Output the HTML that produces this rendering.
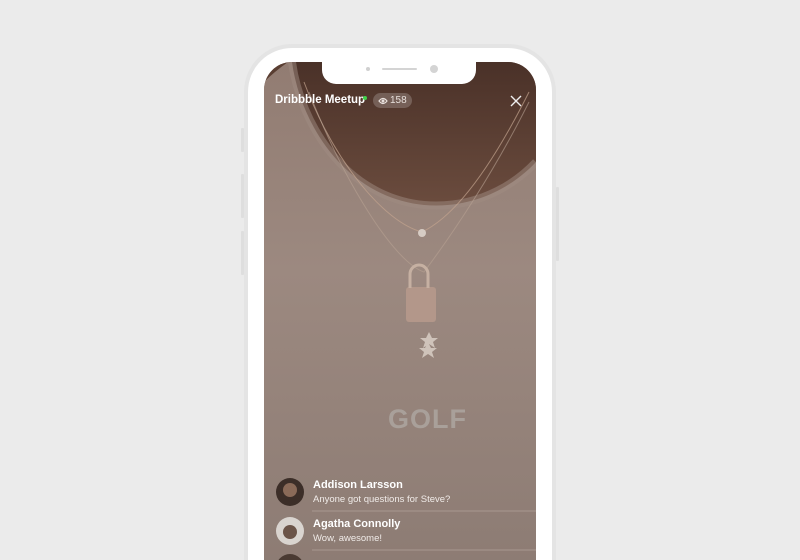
<!DOCTYPE html>
<html style="width:800px;height:560px;overflow:hidden"><head><meta charset="utf-8"><style>
body{margin:0;width:800px;height:560px;background:#ebebeb;overflow:hidden;position:relative;font-family:"Liberation Sans",sans-serif}
.phone{position:absolute;left:244px;top:44px;width:312px;height:516px;border-radius:48px 48px 0 0;background:#fff;border:4px solid #e4e4e4;border-bottom:none;box-sizing:border-box}
.btn{position:absolute;background:#dedede;width:3px;border-radius:1px}
.screen{position:absolute;left:264px;top:62px;width:272px;height:498px;border-radius:28px 28px 0 0;overflow:hidden;background:#927f76}
.txt{position:absolute;color:#fff;font-weight:bold}
</style></head><body>
<div class="btn" style="left:241px;top:128px;height:24px"></div>
<div class="btn" style="left:241px;top:174px;height:44px"></div>
<div class="btn" style="left:241px;top:231px;height:44px"></div>
<div class="btn" style="left:556px;top:187px;height:74px"></div>
<div class="phone"></div>
<div class="screen">
<svg width="272" height="520" style="position:absolute;left:0;top:0">
<defs>
<linearGradient id="sk" x1="0" y1="0" x2="0" y2="1"><stop offset="0" stop-color="#4a3128"/><stop offset="1" stop-color="#6b4c3e"/></linearGradient>
<linearGradient id="sh" x1="0" y1="0" x2="0" y2="1"><stop offset="0" stop-color="#927c72"/><stop offset="0.4" stop-color="#9c8980"/><stop offset="1" stop-color="#8c7b73"/></linearGradient>
</defs>
<rect width="272" height="520" fill="url(#sh)"/>
<path d="M0 0 L0 20 Q10 10 24 0 Z" fill="#5a3e32"/>
<path d="M28 0 C36 60 80 135 160 143 C220 148 258 115 272 100 L272 0 Z" fill="url(#sk)"/>
<path d="M28 0 C36 60 80 135 160 143 C220 148 258 115 272 100" fill="none" stroke="#a08c82" stroke-width="8" opacity=".5"/>
<path d="M40 20 C70 100 120 160 158 170 C200 150 240 80 265 30" fill="none" stroke="#c3a48f" stroke-width="1" opacity=".7"/>
<path d="M45 30 C80 120 130 200 160 210 C190 170 230 110 265 40" fill="none" stroke="#b8a192" stroke-width="1" opacity=".6"/>
<circle cx="158" cy="171" r="4" fill="#d6ccc4"/>
<rect x="142" y="225" width="30" height="35" rx="3" fill="#b3978a"/>
<path d="M146 226 V212 a9 9 0 0 1 18 0 V226" fill="none" stroke="#c6b0a2" stroke-width="3"/>
<path d="M165 270 l3 6 6 0 -5 4 2 6 -6 -4 -6 4 2 -6 -5 -4 6 0z" fill="#cfc3ba"/>
<path d="M164 280 l3 6 6 0 -5 4 2 6 -6 -4 -6 4 2 -6 -5 -4 6 0z" fill="#cfc3ba"/>
<text x="124" y="366" font-family="Liberation Sans" font-weight="bold" font-size="27" fill="#a9a09a" letter-spacing="1">GOLF</text>
<line x1="48" y1="449" x2="272" y2="449" stroke="#a89890" stroke-width="1"/>
<line x1="48" y1="488" x2="272" y2="488" stroke="#a89890" stroke-width="1"/>
<circle cx="26" cy="430" r="14" fill="#3c2e28"/><circle cx="26" cy="428" r="7" fill="#8a6a58"/>
<circle cx="26" cy="469" r="14" fill="#d9d4cf"/><circle cx="26" cy="470" r="7" fill="#6b5448"/>
<circle cx="26" cy="506" r="14" fill="#4a3a32"/>
</svg>
<div style="position:absolute;left:58px;top:-2px;width:154px;height:24px;background:#fff;border-radius:0 0 14px 14px"></div>
<div style="position:absolute;left:102px;top:5px;width:4px;height:4px;border-radius:50%;background:#d0d0d0"></div>
<div style="position:absolute;left:118px;top:6px;width:35px;height:2px;border-radius:1px;background:#d4d4d4"></div>
<div style="position:absolute;left:166px;top:3px;width:8px;height:8px;border-radius:50%;background:#d4d4d4"></div>
<div class="txt" style="left:11px;top:32px;font-size:11.5px">Dribbble Meetup</div>
<div style="position:absolute;left:99px;top:34px;width:4px;height:4px;border-radius:50%;background:#3fd34a"></div>
<div style="position:absolute;left:109px;top:31px;width:39px;height:15px;border-radius:8px;background:rgba(255,255,255,.2);color:#e8e0dc;font-size:10px;line-height:15px">
<svg width="10" height="8" style="position:absolute;left:5px;top:4px"><path d="M1 4 Q5 -1 9 4 Q5 9 1 4Z" fill="none" stroke="#e8e0dc" stroke-width="1.2"/><circle cx="5" cy="4" r="1.5" fill="#e8e0dc"/></svg>
<span style="position:absolute;left:17px">158</span></div>
<svg width="12" height="12" style="position:absolute;left:246px;top:33px"><path d="M1 1L11 11M11 1L1 11" stroke="#eee" stroke-width="1.4"/></svg>
<div class="txt" style="left:49px;top:417px;font-size:11px">Addison Larsson</div>
<div style="position:absolute;left:49px;top:432px;font-size:9.5px;color:#f0ebe8">Anyone got questions for Steve?</div>
<div class="txt" style="left:49px;top:456px;font-size:11px">Agatha Connolly</div>
<div style="position:absolute;left:49px;top:471px;font-size:9.5px;color:#f0ebe8">Wow, awesome!</div>
</div>
</body></html>
